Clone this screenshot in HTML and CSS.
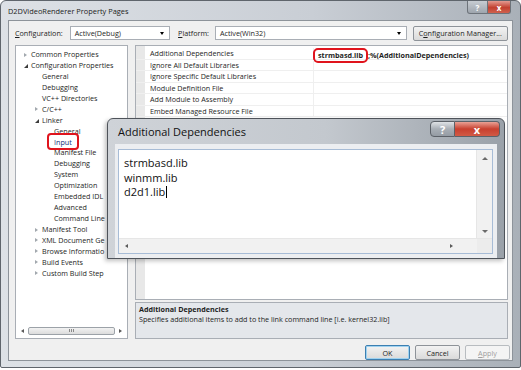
FILE: index.html
```html
<!DOCTYPE html>
<html lang="en">
<head>
  <meta charset="UTF-8">
  <title>D2DVideoRenderer Property Pages</title>
  <link rel="stylesheet" href="styles.css">
</head>
<body>
  <div class="window">
    <div class="titlebar">
      <span class="title">D2DVideoRenderer Property Pages</span>
      <div class="caption">
        <span class="cap cap-help">?</span>
        <span class="cap cap-close">x</span>
      </div>
    </div>

    <div class="client">
      <div class="config-row">
        <span class="label"><u>C</u>onfiguration:</span>
        <div class="combo combo-config">Active(Debug)<span class="arrow"></span></div>
        <span class="label label-platform"><u>P</u>latform:</span>
        <div class="combo combo-platform">Active(Win32)<span class="arrow"></span></div>
        <div class="btn btn-manager">C<u>o</u>nfiguration Manager...</div>
      </div>

      <div class="main">
        <div class="tree">
          <ul class="tree-list">
            <li class="lvl0"><span class="tw closed"></span>Common Properties</li>
            <li class="lvl0"><span class="tw open"></span>Configuration Properties</li>
            <li class="lvl1">General</li>
            <li class="lvl1">Debugging</li>
            <li class="lvl1">VC++ Directories</li>
            <li class="lvl1"><span class="tw closed"></span>C/C++</li>
            <li class="lvl1"><span class="tw open"></span>Linker</li>
            <li class="lvl2">General</li>
            <li class="lvl2 selected">Input</li>
            <li class="lvl2">Manifest File</li>
            <li class="lvl2">Debugging</li>
            <li class="lvl2">System</li>
            <li class="lvl2">Optimization</li>
            <li class="lvl2">Embedded IDL</li>
            <li class="lvl2">Advanced</li>
            <li class="lvl2">Command Line</li>
            <li class="lvl1"><span class="tw closed"></span>Manifest Tool</li>
            <li class="lvl1"><span class="tw closed"></span>XML Document Ge</li>
            <li class="lvl1"><span class="tw closed"></span>Browse Informatio</li>
            <li class="lvl1"><span class="tw closed"></span>Build Events</li>
            <li class="lvl1"><span class="tw closed"></span>Custom Build Step</li>
          </ul>
          <div class="hscroll">
            <span class="tri tri-left"></span>
            <div class="sb-track"><div class="sb-thumb"></div></div>
            <span class="tri tri-right"></span>
          </div>
        </div>

        <div class="right">
          <div class="grid">
            <div class="row"><span class="name">Additional Dependencies</span><span class="value"><span class="hl">strmbasd.lib</span>;%(AdditionalDependencies)</span></div>
            <div class="row"><span class="name">Ignore All Default Libraries</span><span class="value"></span></div>
            <div class="row"><span class="name">Ignore Specific Default Libraries</span><span class="value"></span></div>
            <div class="row"><span class="name">Module Definition File</span><span class="value"></span></div>
            <div class="row"><span class="name">Add Module to Assembly</span><span class="value"></span></div>
            <div class="row"><span class="name">Embed Managed Resource File</span><span class="value"></span></div>
          </div>
          <div class="desc">
            <div class="desc-title">Additional Dependencies</div>
            <div class="desc-text">Specifies additional items to add to the link command line [i.e. kernel32.lib]</div>
          </div>
        </div>
      </div>

      <div class="buttons">
        <div class="btn btn-ok">OK</div>
        <div class="btn">Cancel</div>
        <div class="btn btn-disabled"><u>A</u>pply</div>
      </div>
    </div>

    <!-- the child dialog opened over the property pages -->
    <div class="dialog">
      <div class="dlg-titlebar">
        <span class="dlg-title">Additional Dependencies</span>
        <div class="dlg-caption">
          <span class="dcap dcap-help">?</span>
          <span class="dcap dcap-close">x</span>
        </div>
      </div>
      <div class="dlg-body">
        <div class="editbox">
          <div class="edit-main">
            <div class="edit-text">
              <div>strmbasd.lib</div>
              <div>winmm.lib</div>
              <div>d2d1.lib<span class="caret"></span></div>
            </div>
            <div class="vscroll">
              <span class="tri tri-up"></span>
              <span class="tri tri-down"></span>
            </div>
          </div>
          <div class="edit-hscroll">
            <span class="tri tri-left"></span>
            <span class="tri tri-right"></span>
            <span class="corner"></span>
          </div>
        </div>
      </div>
    </div>
  </div>
</body>
</html>
```

FILE: styles.css
```css
body {
  margin: 0;
  background: #ffffff;
  font-family: "Open Sans", "Noto Sans", sans-serif;
  color: #1e1e1e;
}
.window {
  position: relative;
  width: 519px;
  height: 366px;
  border: 1px solid #5f656c;
  border-radius: 6px 6px 2px 2px;
  background: linear-gradient(to right, #dde1e6, #c9ced5 60%, #a9b0b8);
  display: flex;
  flex-direction: column;
}
.titlebar {
  height: 20px;
  display: flex;
  align-items: flex-start;
  justify-content: space-between;
}
.title {
  font-size: 7.4px;
  padding: 5px 0 0 7px;
  color: #222;
}
.caption {
  display: flex;
  margin-right: 9px;
}
.cap {
  height: 12px;
  font-size: 8px;
  font-weight: bold;
  color: #fff;
  display: flex;
  align-items: center;
  justify-content: center;
  border: 1px solid #6d737a;
  border-top: none;
}
.cap-help {
  width: 19px;
  background: linear-gradient(#c7ccd2, #9ea5ad);
  border-radius: 0 0 0 3px;
}
.cap-close {
  width: 22px;
  background: linear-gradient(#e49b91, #c2402f 55%, #d0624f);
  border-left: none;
  border-radius: 0 0 3px 0;
}
.client {
  flex: 1;
  margin: 0 7px 6px 7px;
  background: #f0f0f0;
  border: 1px solid #8d939a;
  display: flex;
  flex-direction: column;
  padding: 4px 4px 0 6px;
  font-size: 7.2px;
}
.config-row {
  height: 16px;
  display: flex;
  align-items: center;
}
.label {
  margin-right: 7px;
}
.label-platform {
  margin-left: 8px;
  margin-right: 6px;
}
.combo {
  height: 14px;
  box-sizing: border-box;
  border: 1px solid #a9aeb5;
  background: #fff;
  padding-left: 4px;
  display: flex;
  align-items: center;
  justify-content: space-between;
}
.combo-config {
  width: 101px;
}
.combo-platform {
  width: 193px;
}
.arrow {
  width: 0;
  height: 0;
  border-left: 2.5px solid transparent;
  border-right: 2.5px solid transparent;
  border-top: 3px solid #000;
  margin-right: 5px;
}
.btn {
  height: 15px;
  box-sizing: border-box;
  border: 1px solid #8e9399;
  border-radius: 2px;
  background: linear-gradient(#f3f3f3, #e6e6e6 50%, #dadada);
  display: flex;
  align-items: center;
  justify-content: center;
  width: 45px;
}
.btn-manager {
  width: 96px;
  margin-left: 6px;
}
.main {
  display: flex;
  margin-top: 4px;
  height: 294px;
  gap: 7px;
}
.tree {
  width: 113px;
  box-sizing: border-box;
  border: 1px solid #a9aeb5;
  background: #fff;
  display: flex;
  flex-direction: column;
  justify-content: space-between;
  overflow: hidden;
}
.tree-list {
  list-style: none;
  margin: 0;
  padding: 3px 0 0 0;
  white-space: nowrap;
}
.tree-list li {
  height: 10.95px;
  line-height: 10.95px;
  position: relative;
}
.lvl0 { padding-left: 15px; }
.lvl1 { padding-left: 26px; }
.lvl2 { padding-left: 38px; }
.tw {
  position: absolute;
  margin-left: -7px;
  top: 3.5px;
  width: 0;
  height: 0;
}
.tw.closed {
  border-top: 2.5px solid transparent;
  border-bottom: 2.5px solid transparent;
  border-left: 3px solid #a2a8ae;
}
.tw.open {
  top: 4px;
  border-left: 4px solid transparent;
  border-bottom: 4px solid #3c3c3c;
}
.selected {
  color: #0f2f7a;
}
.selected::before {
  content: "";
  position: absolute;
  left: 31px;
  top: -4px;
  width: 32px;
  height: 17px;
  border: 2px solid #e0141d;
  border-radius: 4px;
  box-sizing: border-box;
}
.hscroll {
  height: 9px;
  margin: 0 1px 3px 1px;
  display: flex;
  align-items: center;
}
.tri {
  width: 0;
  height: 0;
}
.tri-left {
  border-top: 2.5px solid transparent;
  border-bottom: 2.5px solid transparent;
  border-right: 3px solid #5a5a5a;
  margin: 0 4px;
}
.tri-right {
  border-top: 2.5px solid transparent;
  border-bottom: 2.5px solid transparent;
  border-left: 3px solid #5a5a5a;
  margin: 0 4px;
}
.tri-up {
  border-left: 3px solid transparent;
  border-right: 3px solid transparent;
  border-bottom: 3px solid #6a6a6a;
}
.tri-down {
  border-left: 3px solid transparent;
  border-right: 3px solid transparent;
  border-top: 3px solid #6a6a6a;
}
.sb-track {
  flex: 1;
  height: 8px;
}
.sb-thumb {
  height: 8px;
  box-sizing: border-box;
  border: 1px solid #9ca2a8;
  border-radius: 2px;
  background: linear-gradient(#f2f2f2, #dcdcdc);
  position: relative;
}
.sb-thumb::after {
  content: "";
  position: absolute;
  left: 50%;
  top: 1.5px;
  width: 5px;
  height: 3px;
  margin-left: -2.5px;
  border-left: 1px solid #8a8a8a;
  border-right: 1px solid #8a8a8a;
  box-sizing: border-box;
  background: linear-gradient(to right, transparent 1px, #8a8a8a 1px, #8a8a8a 2px, transparent 2px);
}
.right {
  flex: 1;
  display: flex;
  flex-direction: column;
  gap: 2px;
}
.grid {
  flex: 1;
  box-sizing: border-box;
  border: 1px solid #a9aeb5;
  background: linear-gradient(to right, #e8e8e8 9px, #fff 9px);
  padding-top: 2px;
}
.row {
  display: flex;
  height: 11.5px;
  line-height: 11.5px;
  border-bottom: 1px solid #efefef;
  box-sizing: border-box;
}
.name {
  width: 178px;
  padding-left: 14px;
  box-sizing: border-box;
  border-right: 1px solid #efefef;
  white-space: nowrap;
  overflow: hidden;
}
.value {
  flex: 1;
  padding-left: 3px;
  font-weight: bold;
  white-space: nowrap;
}
.hl {
  display: inline-block;
  line-height: 9px;
  padding: 1px 3px;
  border: 2px solid #e0141d;
  border-radius: 5px;
  margin-left: -4px;
}
.desc {
  height: 37px;
  box-sizing: border-box;
  border: 1px solid #a9aeb5;
  background: #e4e7eb;
  padding: 2px 3px;
  line-height: 9.5px;
}
.desc-title {
  font-weight: bold;
}
.buttons {
  display: flex;
  justify-content: flex-end;
  gap: 5px;
  margin-top: 6px;
  margin-right: -2px;
}
.btn-ok {
  border-color: #3c7fb1;
  box-shadow: inset 0 0 0 1px #9fd2f0;
}
.btn-disabled {
  color: #a0a0a0;
  border-color: #b8bcc0;
  background: #f4f4f4;
}

/* child dialog */
.dialog {
  position: absolute;
  left: 106px;
  top: 117px;
  width: 398px;
  height: 141px;
  box-sizing: border-box;
  border: 1px solid #4e535a;
  border-radius: 6px 6px 0 0;
  background: linear-gradient(to right, #cfd3d8, #c3c8ce 55%, #9aa1a9);
  box-shadow: -2px 2px 4px rgba(0, 0, 0, 0.25);
  display: flex;
  flex-direction: column;
}
.dlg-titlebar {
  height: 25px;
  display: flex;
  justify-content: space-between;
  align-items: flex-start;
}
.dlg-title {
  font-size: 11px;
  padding: 5px 0 0 10px;
  color: #111;
}
.dlg-caption {
  display: flex;
  margin-right: 4px;
  margin-top: 2px;
}
.dcap {
  height: 16px;
  box-sizing: border-box;
  border: 1px solid #5c6168;
  display: flex;
  align-items: center;
  justify-content: center;
  color: #fff;
  font-weight: bold;
  font-size: 11px;
}
.dcap-help {
  width: 25px;
  border-radius: 4px 0 0 4px;
  background: linear-gradient(#dfe2e6, #a8aeb5 50%, #959ca4);
}
.dcap-close {
  width: 45px;
  border-left: none;
  border-radius: 0 4px 4px 0;
  background: linear-gradient(#e9a195, #c8402f 50%, #d25a45);
}
.dlg-body {
  flex: 1;
  margin: 0 7px 0 7px;
  background: #eceef1;
  padding: 5px 4px 4px 3px;
  display: flex;
}
.editbox {
  flex: 1;
  border: 1px solid #a7bcd6;
  background: #fff;
  display: flex;
  flex-direction: column;
}
.edit-main {
  flex: 1;
  display: flex;
}
.edit-text {
  flex: 1;
  font-size: 11px;
  line-height: 14.5px;
  padding: 6px 0 0 5px;
  color: #111;
}
.caret {
  display: inline-block;
  width: 1px;
  height: 12px;
  background: #000;
  vertical-align: -2px;
  margin-left: 1px;
}
.vscroll {
  width: 15px;
  background: #f1f1f1;
  border-left: 1px solid #e6e6e6;
  display: flex;
  flex-direction: column;
  justify-content: space-between;
  align-items: center;
  padding: 7px 0 5px 0;
}
.edit-hscroll {
  height: 14px;
  background: #f1f1f1;
  border-top: 1px solid #e6e6e6;
  display: flex;
  align-items: center;
}
.edit-hscroll .tri-left {
  margin-left: 6px;
}
.edit-hscroll .tri-right {
  margin-left: auto;
  margin-right: 24px;
}
.corner {
  width: 15px;
  height: 14px;
  background: #ececec;
}
```
